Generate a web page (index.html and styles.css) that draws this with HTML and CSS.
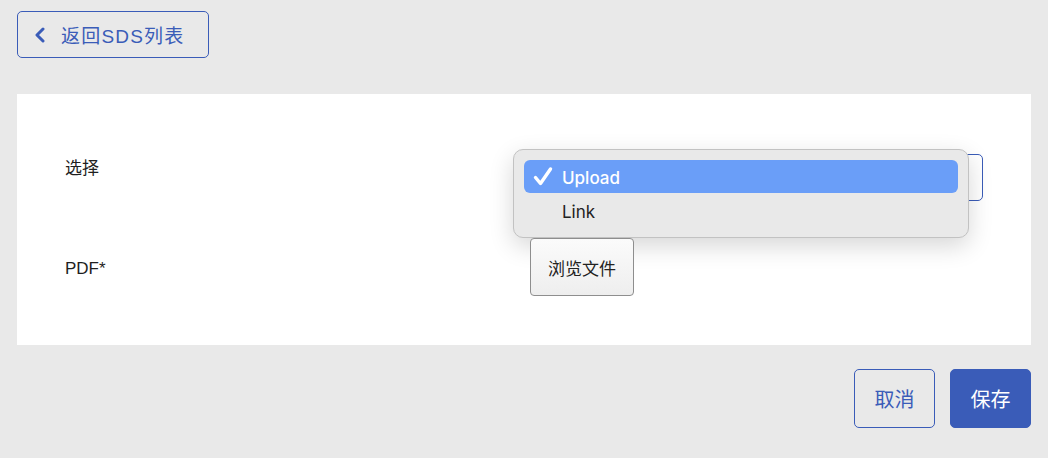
FILE: index.html
```html
<!DOCTYPE html>
<html lang="zh">
<head>
<meta charset="utf-8">
<link rel="stylesheet" href="styles.css">
</head>
<body>
<div class="page">
  <div class="top">
    <button class="back-btn">
      <svg class="chev" width="12" height="16" viewBox="0 0 12 16"><path d="M9 2 L3 8 L9 14" fill="none" stroke="#3a5cb8" stroke-width="3" stroke-linecap="round" stroke-linejoin="round"/></svg>
      <span>返回SDS列表</span>
    </button>
  </div>
  <div class="panel">
    <div class="row">
      <div class="label label-top">选择</div>
      <div class="control">
        <div class="select-wrap">
          <div class="select"><span class="arrow"></span></div>
          <div class="menu">
            <div class="opt selected">
              <svg class="check" width="22" height="22" viewBox="0 0 22 22"><path d="M3.5 11.5 L8.5 17.5 L18.5 3" fill="none" stroke="#fff" stroke-width="3.4" stroke-linecap="round" stroke-linejoin="round"/></svg>
              <span>Upload</span>
            </div>
            <div class="opt"><span>Link</span></div>
          </div>
        </div>
      </div>
    </div>
    <div class="row row-center">
      <div class="label label-pdf">PDF*</div>
      <div class="control">
        <button class="browse">浏览文件</button>
      </div>
    </div>
  </div>
  <div class="actions">
    <button class="btn btn-outline">取消</button>
    <button class="btn btn-primary">保存</button>
  </div>
</div>
</body>
</html>
```

FILE: styles.css
```css
* { box-sizing: border-box; }
html, body { margin: 0; padding: 0; }
body {
  background: #e9e9e9;
  font-family: "Liberation Sans", "Noto Sans CJK SC", sans-serif;
  color: #1f1f1f;
  width: 1048px;
  height: 458px;
  overflow: hidden;
}
.page {
  padding: 11px 17px 0 17px;
}
.top { display: flex; }
.back-btn {
  display: flex;
  align-items: center;
  gap: 15px;
  width: 192px;
  height: 47px;
  padding: 0 0 0 16px;
  border: 1px solid #3a5cb8;
  border-radius: 5px;
  background: transparent;
  color: #3a5cb8;
  font-family: "Liberation Sans", "Noto Sans CJK SC", sans-serif;
  font-size: 19px;
  letter-spacing: 1.2px;
}
.chev { display: block; flex: none; }
.panel {
  margin-top: 36px;
  background: #fff;
  padding: 60px 48px 49px 48px;
  display: flex;
  flex-direction: column;
  gap: 37px;
}
.row {
  display: grid;
  grid-template-columns: 465px 1fr;
  align-items: start;
}
.row-center { align-items: center; }
.label {
  font-size: 17px;
  color: #1f1f1f;
}
.label-top { padding-top: 0; }
.label-pdf { padding-top: 3px; }
.control { position: relative; }
.select-wrap { position: relative; }
.select {
  height: 47px;
  border: 1px solid #3a5cb8;
  border-radius: 5px;
  background: #fff;
  position: relative;
}
.arrow {
  position: absolute;
  right: 14px;
  top: 21px;
  width: 2px;
  height: 2px;
  background: #555;
}
.menu {
  position: absolute;
  left: -17px;
  top: -5px;
  width: 456px;
  height: 89px;
  background: #e9e9e9;
  border: 1px solid #c2c2c2;
  border-radius: 10px;
  box-shadow: 0 8px 24px rgba(0,0,0,0.16);
  padding: 10px 10px;
  display: flex;
  flex-direction: column;
  gap: 1px;
  font-family: "Inter", "Liberation Sans", sans-serif;
  font-size: 17px;
  font-weight: 400;
}
.opt {
  height: 33px;
  display: flex;
  align-items: center;
  padding-left: 38px;
  padding-top: 2px;
  position: relative;
  color: #222;
  border-radius: 6px;
}
.opt.selected {
  background: #6a9ef8;
  color: #fff;
  font-weight: 500;
}
.check {
  position: absolute;
  left: 8px;
  top: 6px;
}
.browse {
  width: 104px;
  height: 58px;
  border: 1px solid #8e8e8e;
  border-radius: 4px;
  background: linear-gradient(#fbfbfb, #eeeeee);
  font-family: "Liberation Sans", "Noto Sans CJK SC", sans-serif;
  font-size: 17px;
  color: #222;
  padding: 0;
}
.actions {
  display: flex;
  justify-content: flex-end;
  gap: 15px;
  margin-top: 24px;
}
.btn {
  width: 81px;
  height: 59px;
  border-radius: 5px;
  font-family: "Liberation Sans", "Noto Sans CJK SC", sans-serif;
  font-size: 20px;
  padding: 0;
}
.btn-outline {
  background: transparent;
  border: 1px solid #3a5cb8;
  color: #3a5cb8;
}
.btn-primary {
  background: #3a5cb8;
  border: 1px solid #3a5cb8;
  color: #fff;
}
```
